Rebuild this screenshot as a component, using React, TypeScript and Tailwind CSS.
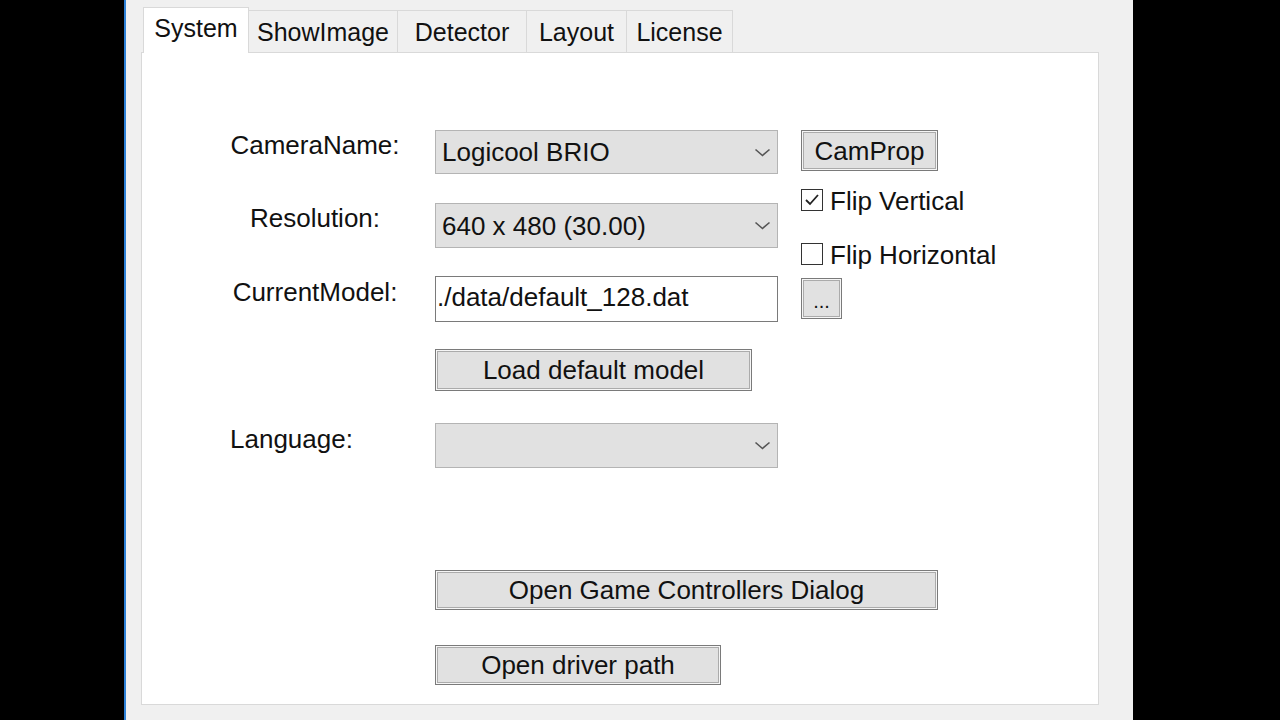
import React from "react";

const font = { fontFamily: '"Liberation Sans", Arial, sans-serif' };

function Chevron() {
  return (
    <svg width="17" height="9" viewBox="0 0 17 9" className="shrink-0">
      <polyline points="1.5,1.5 8.5,7.5 15.5,1.5" fill="none" stroke="#555" strokeWidth="1.6" />
    </svg>
  );
}

function Combo({ value, h }: { value?: string; h: string }) {
  return (
    <div className={`w-[343px] ${h} bg-[#e1e1e1] border border-[#b4b4b4] flex items-center justify-between pl-[6px] pr-[6px]`}>
      <span className="text-[26px] leading-none text-[#111]">{value}</span>
      <Chevron />
    </div>
  );
}

function Button({ label, w, h }: { label: string; w: string; h: string }) {
  return (
    <div
      className={`${w} ${h} bg-[#e1e1e1] border border-[#7a7a7a] shadow-[inset_0_0_0_1px_#f6f6f6,inset_0_0_0_2px_#ababab] flex items-center justify-center text-[26px] leading-none text-[#111]`}
    >
      {label}
    </div>
  );
}

function Checkbox({ label, checked }: { label: string; checked?: boolean }) {
  return (
    <div className="flex items-center h-[23px]">
      <div className="w-[22px] h-[22px] border border-[#333] bg-white flex items-center justify-center">
        {checked && (
          <svg width="16" height="14" viewBox="0 0 16 14">
            <polyline points="2,7 6,11 14,2" fill="none" stroke="#222" strokeWidth="1.8" />
          </svg>
        )}
      </div>
      <span className="ml-[7px] pt-[3px] text-[26px] leading-none text-[#111]">{label}</span>
    </div>
  );
}

const tabs = [
  { name: "ShowImage", w: "w-[149px]" },
  { name: "Detector", w: "w-[129px]" },
  { name: "Layout", w: "w-[100px]" },
  { name: "License", w: "w-[106px]" },
];

export default function App() {
  return (
    <div className="w-[1280px] h-[720px] bg-black flex overflow-hidden" style={font}>
      <div className="w-[124px] shrink-0 bg-black" />
      <div className="w-[2px] shrink-0 bg-[#2f82d8]" />
      <div className="w-[1007px] shrink-0 bg-[#f0f0f0] pl-[15px] pt-[7px] flex flex-col">
        {/* tabs */}
        <div className="flex items-end h-[45px] pl-[2px] relative z-10">
          <div className="w-[106px] h-[46px] -mb-px bg-white border border-b-0 border-[#d9d9d9] flex items-center justify-center pb-[4px] text-[25px] leading-none text-[#111]">
            System
          </div>
          {tabs.map((t) => (
            <div
              key={t.name}
              className={`${t.w} h-[42px] bg-[#f0f0f0] border border-l-0 border-b-0 border-[#d9d9d9] flex items-center justify-center pt-[2px] text-[25px] leading-none text-[#111]`}
            >
              {t.name}
            </div>
          ))}
        </div>

        {/* panel */}
        <div className="w-[958px] h-[653px] bg-white border border-[#d9d9d9] flex pl-[87px] pt-[77px]">
          <div className="flex flex-col w-[549px]">
            <div className="flex items-start">
              <div className="w-[206px] pt-px">
                <div className="w-[172px] text-center text-[26px] leading-[29px] text-[#111]">CameraName:</div>
              </div>
              <Combo value="Logicool BRIO" h="h-[44px]" />
            </div>
            <div className="flex items-start mt-[29px]">
              <div className="w-[206px] pt-px">
                <div className="w-[172px] text-center text-[26px] leading-[29px] text-[#111]">Resolution:</div>
              </div>
              <Combo value="640 x 480 (30.00)" h="h-[45px]" />
            </div>
            <div className="flex items-start mt-[28px]">
              <div className="w-[206px] pt-[2px]">
                <div className="w-[172px] text-center text-[26px] leading-[29px] text-[#111]">CurrentModel:</div>
              </div>
              <div className="w-[343px] h-[46px] bg-white border border-[#7a7a7a] flex items-center pl-px pb-[5px] text-[26px] leading-none text-[#111]">
                ./data/default_128.dat
              </div>
            </div>
            <div className="mt-[27px] ml-[206px]">
              <Button label="Load default model" w="w-[317px]" h="h-[42px]" />
            </div>
            <div className="flex items-start mt-[32px]">
              <div className="w-[206px] pt-[2px] pl-px text-[26px] leading-[29px] text-[#111]">Language:</div>
              <Combo h="h-[45px]" />
            </div>
            <div className="mt-[102px] ml-[206px]">
              <Button label="Open Game Controllers Dialog" w="w-[503px]" h="h-[40px]" />
            </div>
            <div className="mt-[35px] ml-[206px]">
              <Button label="Open driver path" w="w-[286px]" h="h-[40px]" />
            </div>
          </div>

          <div className="flex flex-col ml-[23px]">
            <Button label="CamProp" w="w-[137px]" h="h-[41px]" />
            <div className="mt-[17px]">
              <Checkbox label="Flip Vertical" checked />
            </div>
            <div className="mt-[31px]">
              <Checkbox label="Flip Horizontal" />
            </div>
            <div className="mt-[13px]">
              <div className="w-[41px] h-[41px] bg-[#e1e1e1] border border-[#7a7a7a] shadow-[inset_0_0_0_1px_#f6f6f6,inset_0_0_0_2px_#ababab] flex items-end justify-center pb-[7px] text-[20px] leading-none text-[#111]">
                ...
              </div>
            </div>
          </div>
        </div>
      </div>
      <div className="flex-1 bg-black" />
    </div>
  );
}
